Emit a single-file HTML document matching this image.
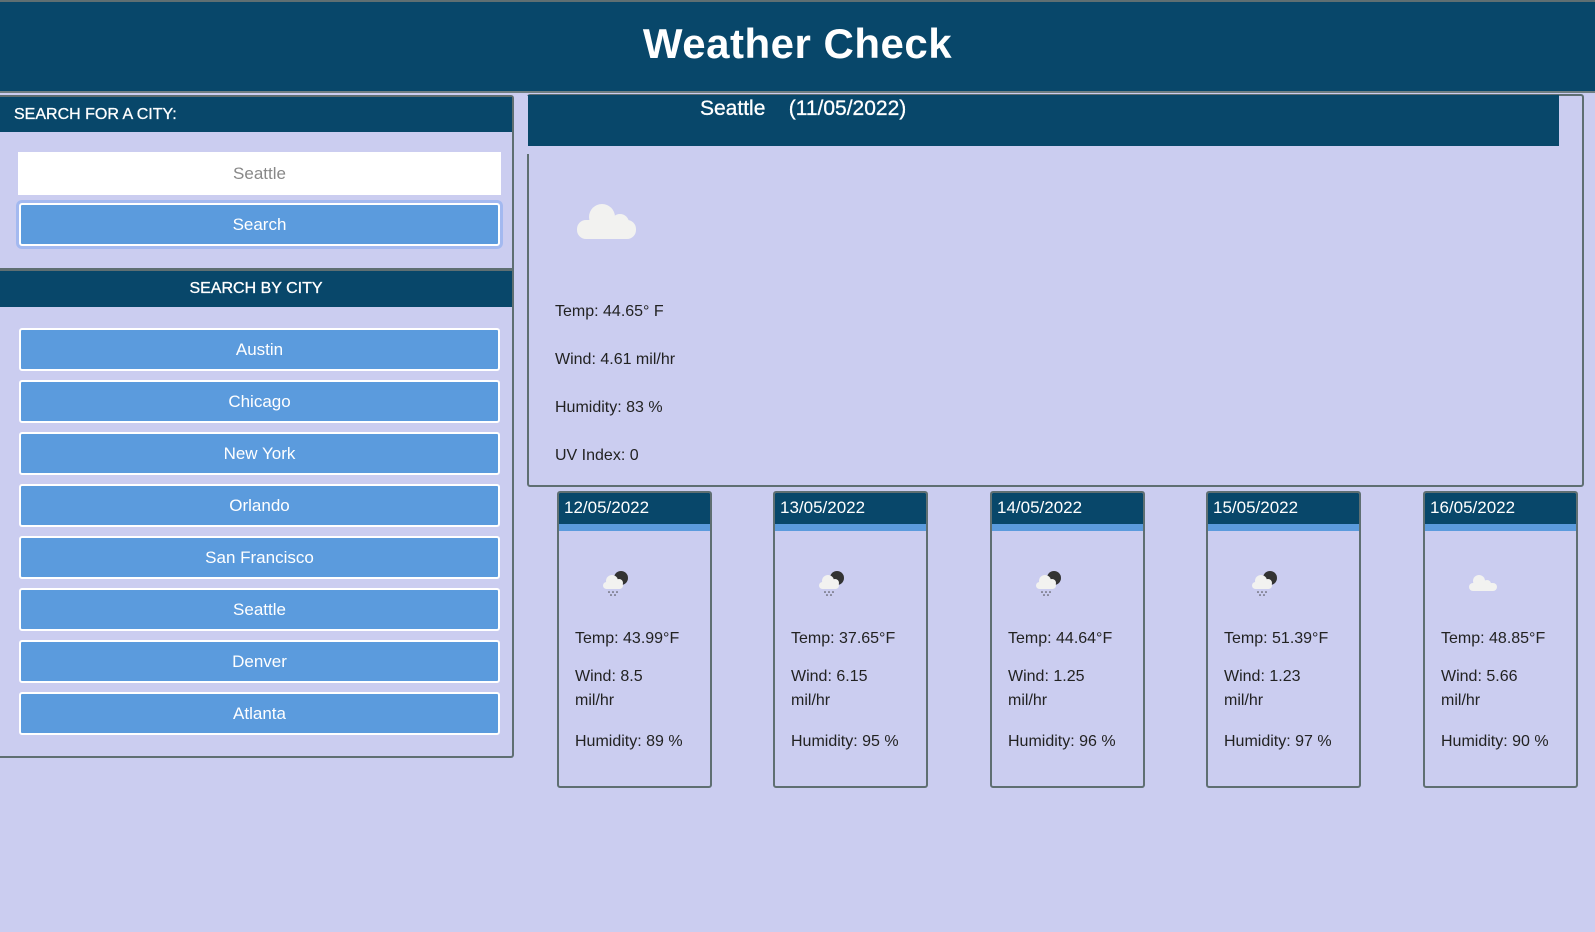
<!DOCTYPE html>
<html><head><meta charset="utf-8"><style>
*{box-sizing:border-box;margin:0;padding:0}
body{width:1595px;height:932px;background:#cbcdf0;font-family:"Liberation Sans",sans-serif;position:relative;overflow:hidden;color:#222}
.a{position:absolute}
.dark{background:#08476a;color:#fff}
.btn{position:absolute;left:19px;width:481px;height:43px;background:#5b9bdd;border:2px solid #fff;border-radius:3px;color:#fff;font-size:17px;display:flex;align-items:center;justify-content:center}
.card{position:absolute;top:491px;width:155px;height:297px;border:2px solid #5f6f72;border-radius:3px;overflow:hidden}
.card .h{background:#08476a;color:#fff;font-size:17px;padding:5px 0 0 5px;border-bottom:7px solid #5b9bdd;height:38px}
.card p{position:absolute;left:16px;font-size:16px;line-height:24px}
.t{position:absolute;left:28px;font-size:16px}
</style></head><body>
<div class="a dark" style="left:0;top:0;width:1595px;height:91px;border-top:2px solid #5f6f72;text-align:center;font-size:42px;font-weight:bold;padding-top:18px;letter-spacing:0.5px">Weather Check</div>
<div class="a" style="left:0;top:91px;width:1595px;height:2px;background:#6f7f82"></div>

<div class="a" style="left:0;top:95px;width:514px;height:663px;border:2px solid #5f6f72;border-left:none;border-radius:0 3px 3px 0"></div>
<div class="a dark" style="left:0;top:97px;width:512px;height:35px;font-size:16px;padding:9px 14px;-webkit-text-stroke:0.3px #fff">SEARCH FOR A CITY:</div>
<div class="a" style="left:18px;top:152px;width:483px;height:43px;background:#fff;color:#888;font-size:17px;text-align:center;line-height:43px">Seattle</div>
<div class="btn" style="top:203px;box-shadow:0 0 0 3px #a3b9f0">Search</div>
<div class="a" style="left:0;top:268px;width:514px;height:3px;background:#5f6f72"></div>
<div class="a dark" style="left:0;top:271px;width:512px;height:36px;font-size:16px;text-align:center;line-height:36px;-webkit-text-stroke:0.3px #fff">SEARCH BY CITY</div>
<div class="btn" style="top:328px">Austin</div>
<div class="btn" style="top:380px">Chicago</div>
<div class="btn" style="top:432px">New York</div>
<div class="btn" style="top:484px">Orlando</div>
<div class="btn" style="top:536px">San Francisco</div>
<div class="btn" style="top:588px">Seattle</div>
<div class="btn" style="top:640px">Denver</div>
<div class="btn" style="top:692px">Atlanta</div>

<div class="a" style="left:527px;top:94px;width:1057px;height:393px;border:2px solid #5f6f72;border-radius:3px"></div>
<div class="a" style="left:527px;top:96px;width:2px;height:58px;background:#cbcdf0"></div>
<div class="a dark" style="left:528px;top:95px;width:1031px;height:51px;font-size:21px;padding:2px 0 0 172px;white-space:pre;-webkit-text-stroke:0.3px #fff">Seattle    (11/05/2022)</div>
<svg class="a" style="left:577px;top:200px" width="60" height="40" viewBox="0 0 60 40"><g fill="#f2f2f0"><circle cx="25" cy="17" r="13"/><circle cx="43" cy="23" r="9"/><rect x="0" y="20" width="59" height="19" rx="9"/></g></svg>
<div class="t" style="left:555px;top:303px">Temp: 44.65° F</div>
<div class="t" style="left:555px;top:351px">Wind: 4.61 mil/hr</div>
<div class="t" style="left:555px;top:399px">Humidity: 83 %</div>
<div class="t" style="left:555px;top:447px">UV Index: 0</div>

<svg width="0" height="0" style="position:absolute"><defs>
<g id="r"><circle cx="20" cy="9" r="7" fill="#333"/><g fill="#f2f2f0"><circle cx="11" cy="12" r="6"/><circle cx="18" cy="14" r="4"/><rect x="2" y="13" width="20" height="7" rx="3.5"/></g><g fill="#444"><circle cx="8" cy="23" r="0.8"/><circle cx="12" cy="23" r="0.8"/><circle cx="16" cy="23" r="0.8"/><circle cx="10" cy="26" r="0.8"/><circle cx="14" cy="26" r="0.8"/></g></g>
<g id="c"><g fill="#f2f2f0"><circle cx="12" cy="10" r="6"/><circle cx="20" cy="13" r="4"/><rect x="2" y="12" width="28" height="8" rx="4"/></g></g>
</defs></svg>

<div class="card" style="left:557px"><div class="h">12/05/2022</div><svg class="a" style="left:42px;top:76px" width="30" height="30"><use href="#r"/></svg><p style="top:134px">Temp: 43.99°F</p><p style="top:172px">Wind: 8.5<br>mil/hr</p><p style="top:237px">Humidity: 89 %</p></div>
<div class="card" style="left:773px"><div class="h">13/05/2022</div><svg class="a" style="left:42px;top:76px" width="30" height="30"><use href="#r"/></svg><p style="top:134px">Temp: 37.65°F</p><p style="top:172px">Wind: 6.15<br>mil/hr</p><p style="top:237px">Humidity: 95 %</p></div>
<div class="card" style="left:990px"><div class="h">14/05/2022</div><svg class="a" style="left:42px;top:76px" width="30" height="30"><use href="#r"/></svg><p style="top:134px">Temp: 44.64°F</p><p style="top:172px">Wind: 1.25<br>mil/hr</p><p style="top:237px">Humidity: 96 %</p></div>
<div class="card" style="left:1206px"><div class="h">15/05/2022</div><svg class="a" style="left:42px;top:76px" width="30" height="30"><use href="#r"/></svg><p style="top:134px">Temp: 51.39°F</p><p style="top:172px">Wind: 1.23<br>mil/hr</p><p style="top:237px">Humidity: 97 %</p></div>
<div class="card" style="left:1423px"><div class="h">16/05/2022</div><svg class="a" style="left:42px;top:78px" width="32" height="24"><use href="#c"/></svg><p style="top:134px">Temp: 48.85°F</p><p style="top:172px">Wind: 5.66<br>mil/hr</p><p style="top:237px">Humidity: 90 %</p></div>
</body></html>
